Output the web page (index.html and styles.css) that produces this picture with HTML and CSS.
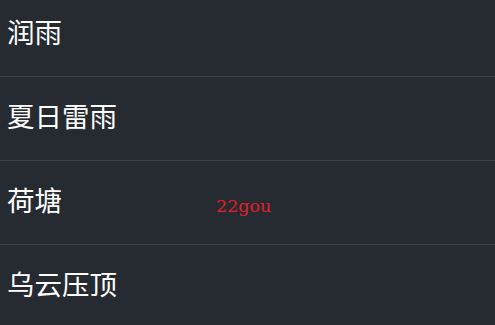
FILE: index.html
```html
<!DOCTYPE html>
<html lang="zh">
<head>
<meta charset="utf-8">
<link rel="stylesheet" href="styles.css">
</head>
<body>
<ul class="list">
  <li class="row"><span class="name">润雨</span></li>
  <li class="row"><span class="name">夏日雷雨</span></li>
  <li class="row"><span class="name">荷塘</span><span class="mark">22gou</span></li>
  <li class="row"><span class="name">乌云压顶</span></li>
</ul>
</body>
</html>
```
FILE: styles.css
```css
html, body {
  margin: 0;
  padding: 0;
  background: #262a31;
  height: 100%;
  overflow: hidden;
}
.list {
  list-style: none;
  margin: -7px 0 0 0;
  padding: 0;
}
.row {
  position: relative;
  height: 77px;
  padding: 0 0 6px 7px;
  border-bottom: 1px solid #3e4146;
  display: flex;
  align-items: center;
}
.name {
  font-family: "Noto Sans CJK SC", sans-serif;
  font-size: 27.5px;
  color: #ffffff;
  line-height: 1;
}
.mark {
  position: absolute;
  left: 216px;
  top: 37px;
  font-family: "DejaVu Serif", serif;
  font-size: 17.5px;
  color: #e3202b;
  line-height: 1;
}
```
